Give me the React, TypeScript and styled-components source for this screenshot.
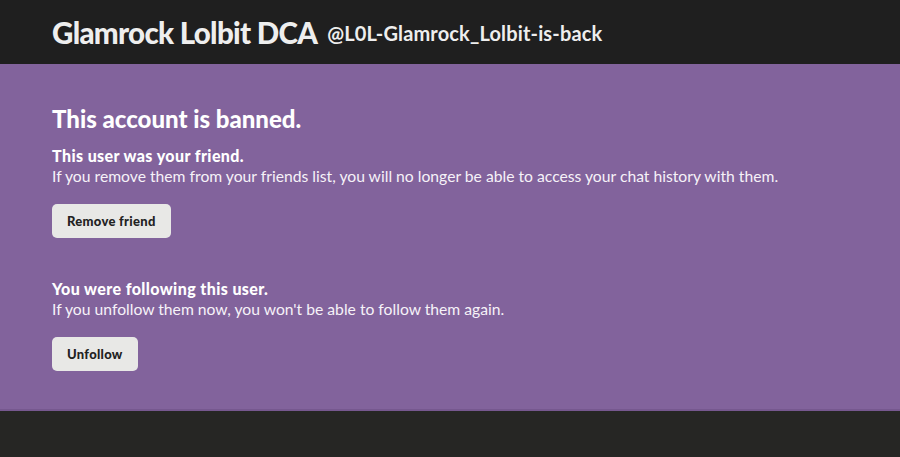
import React from "react";
import styled, { createGlobalStyle } from "styled-components";

const Global = createGlobalStyle`
  html, body { margin: 0; padding: 0; background: #262624; }
  body { font-family: Lato, "Noto Sans", sans-serif; }
`;

const Header = styled.header`
  background: #1f1f1f;
  height: 64px;
  display: flex;
  align-items: center;
  padding: 0 52px;
  gap: 10px;
  box-sizing: border-box;
`;

const Title = styled.h1`
  margin: 0;
  font-family: Lato, sans-serif;
  font-weight: 900;
  font-size: 29.5px;
  color: #eeeeee;
  letter-spacing: -0.7px;
`;

const Handle = styled.span`
  font-family: Lato, sans-serif;
  font-weight: 700;
  font-size: 20px;
  color: #eeeeee;
  padding-top: 2px;
  letter-spacing: 0.15px;
`;

const Main = styled.main`
  background: #82639c;
  border-bottom: 2px solid #76588f;
  padding: 40px 52px 37px;
  color: #ffffff;
  height: 347px;
  box-sizing: border-box;
`;

const Heading = styled.h2`
  margin: 0 0 12px;
  font-family: Lato, sans-serif;
  font-weight: 900;
  font-size: 24px;
  line-height: 30px;
`;

const Section = styled.section<{ $gap?: number }>`
  margin-bottom: ${(p) => p.$gap ?? 0}px;
`;

const Strong = styled.div`
  font-family: Lato, sans-serif;
  font-weight: 900;
  font-size: 16px;
  letter-spacing: 0.4px;
  line-height: 20px;
`;

const Text = styled.p`
  margin: 0 0 17px;
  font-family: Lato, "Noto Sans", sans-serif;
  font-size: 15.7px;
  line-height: 21px;
  color: #f6f2f8;
`;

const Button = styled.button`
  display: block;
  height: 34px;
  padding: 0 15px;
  border: none;
  border-radius: 5px;
  background: #e8e8e6;
  color: #222;
  font-family: Lato, sans-serif;
  font-weight: 900;
  font-size: 13px;
  letter-spacing: 0.3px;
  cursor: pointer;
`;

export default function App() {
  return (
    <>
      <Global />
      <Header>
        <Title>Glamrock Lolbit DCA</Title>
        <Handle>@L0L-Glamrock_Lolbit-is-back</Handle>
      </Header>
      <Main>
        <Heading>This account is banned.</Heading>
        <Section $gap={41}>
          <Strong>This user was your friend.</Strong>
          <Text>
            If you remove them from your friends list, you will no longer be able to access your chat history with them.
          </Text>
          <Button>Remove friend</Button>
        </Section>
        <Section>
          <Strong>You were following this user.</Strong>
          <Text>If you unfollow them now, you won't be able to follow them again.</Text>
          <Button>Unfollow</Button>
        </Section>
      </Main>
    </>
  );
}
